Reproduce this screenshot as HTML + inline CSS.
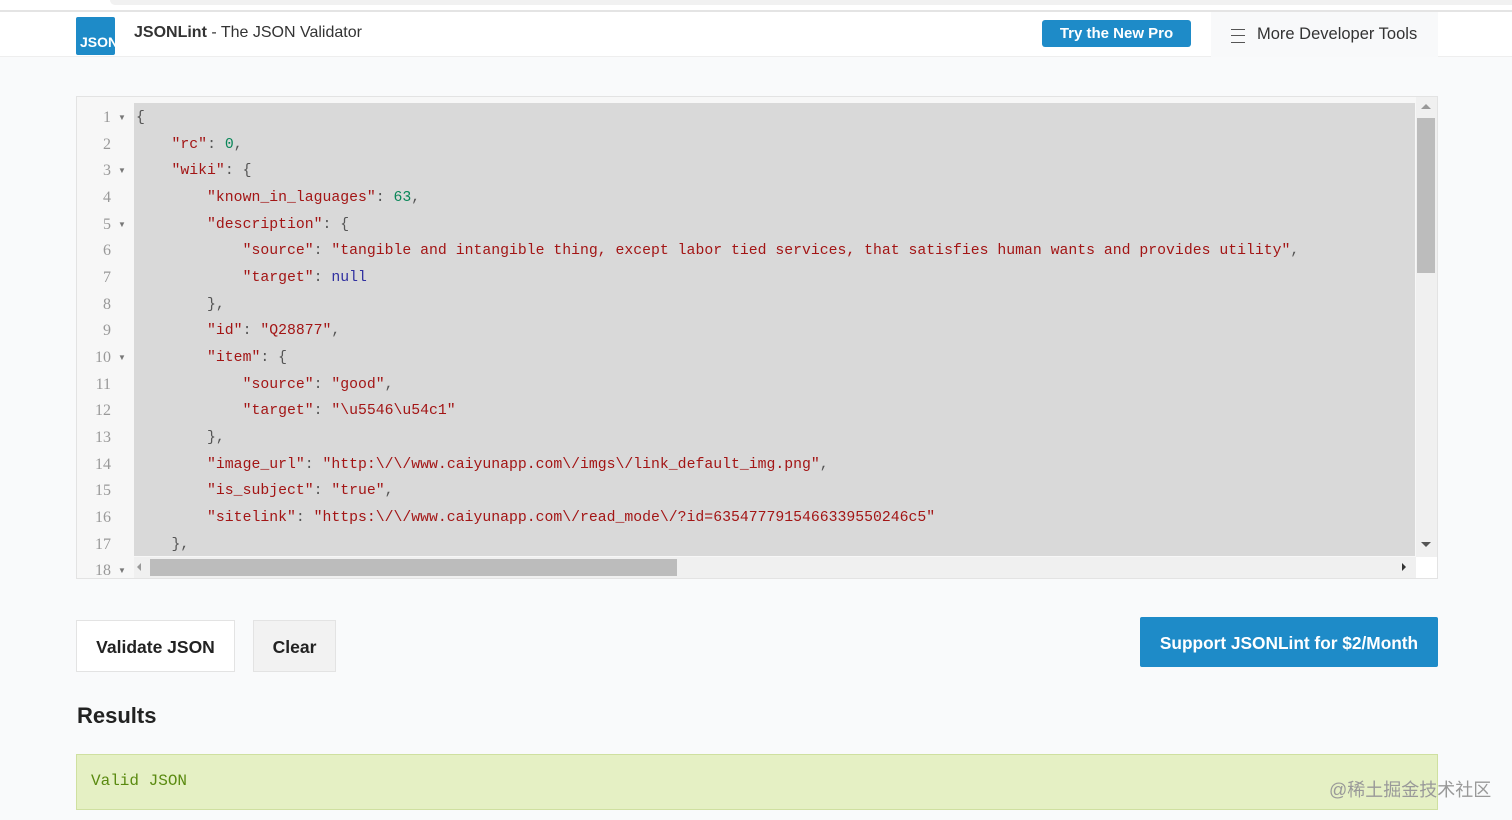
<!DOCTYPE html>
<html><head><meta charset="utf-8"><style>
*{margin:0;padding:0;box-sizing:border-box}
body{width:1512px;height:820px;overflow:hidden;background:#f9fafb;font-family:"Liberation Sans",sans-serif;position:relative}
.abs{position:absolute}
.code{position:absolute;left:136px;font-family:"Liberation Mono","Noto Serif CJK SC",monospace;font-size:14.8px;line-height:26.65px;white-space:pre;color:#555}
.k{color:#a31515}.s{color:#a31515}.n{color:#098658}.nl{color:#3030a0}
.ln{position:absolute;left:77px;width:34px;text-align:right;font-family:"Liberation Serif",serif;font-size:16px;line-height:26.65px;color:#999}
.fa{position:absolute;left:118px;font-size:8px;color:#777}
</style></head><body>
<div class="abs" style="left:0;top:0;width:1512px;height:10px;background:#fff"></div>
<div class="abs" style="left:110px;top:0;width:1402px;height:5px;background:#f1f1f1;border-radius:0 0 0 8px"></div>
<div class="abs" style="left:0;top:10px;width:1512px;height:2px;background:#e4e4e4"></div>
<div class="abs" style="left:0;top:12px;width:1512px;height:45px;background:#fff;border-bottom:1px solid #eee"></div>
<div class="abs" style="left:76px;top:17px;width:39px;height:38px;background:#1e8bc8;border-radius:2px;overflow:hidden;color:#fff;font-weight:bold;font-size:14px;line-height:14px;padding:18px 0 0 4px;white-space:nowrap">JSON</div>
<div class="abs" style="left:134px;top:24px;font-size:16px;color:#333"><b>JSONLint</b> - The JSON Validator</div>
<div class="abs" style="left:1042px;top:20px;width:149px;height:27px;background:#1e8bc8;border-radius:3px;color:#fff;font-weight:bold;font-size:15px;text-align:center;line-height:27px">Try the New Pro</div>
<div class="abs" style="left:1211px;top:12px;width:227px;height:45px;background:#f8f9fa"></div>
<div class="abs" style="left:1231px;top:29px;width:14px;height:14px;border-top:1px solid #555;border-bottom:1px solid #555"></div>
<div class="abs" style="left:1231px;top:35px;width:14px;height:1px;background:#555"></div>
<div class="abs" style="left:1257px;top:25px;font-size:16.5px;color:#333">More Developer Tools</div>

<div class="abs" style="left:76px;top:96px;width:1362px;height:483px;border:1px solid #e3e3e3;background:#f7f7f7"></div>
<div class="abs" style="left:134px;top:103px;width:1281px;height:453px;background:#d9d9d9"></div>
<div class="abs" style="left:1416px;top:97px;width:21px;height:460px;background:#f0f0f0"></div>
<div class="abs" style="left:1417px;top:118px;width:18px;height:155px;background:#bcbcbc"></div>
<div class="abs" style="left:1421px;top:104px;width:0;height:0;border:5px solid transparent;border-bottom-color:#999;border-top:0"></div>
<div class="abs" style="left:1421px;top:542px;width:0;height:0;border:5px solid transparent;border-top-color:#555;border-bottom:0"></div>
<div class="abs" style="left:134px;top:557px;width:1282px;height:21px;background:#f0f0f0"></div>
<div class="abs" style="left:1416px;top:557px;width:21px;height:21px;background:#fff"></div>
<div class="abs" style="left:150px;top:559px;width:527px;height:17px;background:#bcbcbc"></div>
<div class="abs" style="left:137px;top:563px;border:4px solid transparent;border-right-color:#999;border-left:0"></div>
<div class="abs" style="left:1402px;top:563px;border:4px solid transparent;border-left-color:#333;border-right:0"></div>

<div class="ln" style="top:105px">1<br>2<br>3<br>4<br>5<br>6<br>7<br>8<br>9<br>10<br>11<br>12<br>13<br>14<br>15<br>16<br>17<br>18</div>
<div class="fa" style="top:113px">▼</div><div class="fa" style="top:166px">▼</div><div class="fa" style="top:220px">▼</div><div class="fa" style="top:353px">▼</div><div class="fa" style="top:566px">▼</div>
<div class="code" style="top:105px">{
    <span class="k">"rc"</span>: <span class="n">0</span>,
    <span class="k">"wiki"</span>: {
        <span class="k">"known_in_laguages"</span>: <span class="n">63</span>,
        <span class="k">"description"</span>: {
            <span class="k">"source"</span>: <span class="s">"tangible and intangible thing, except labor tied services, that satisfies human wants and provides utility"</span>,
            <span class="k">"target"</span>: <span class="nl">null</span>
        },
        <span class="k">"id"</span>: <span class="s">"Q28877"</span>,
        <span class="k">"item"</span>: {
            <span class="k">"source"</span>: <span class="s">"good"</span>,
            <span class="k">"target"</span>: <span class="s">"\u5546\u54c1"</span>
        },
        <span class="k">"image_url"</span>: <span class="s">"http:\/\/www.caiyunapp.com\/imgs\/link_default_img.png"</span>,
        <span class="k">"is_subject"</span>: <span class="s">"true"</span>,
        <span class="k">"sitelink"</span>: <span class="s">"https:\/\/www.caiyunapp.com\/read_mode\/?id=6354777915466339550246c5"</span>
    },</div>

<div class="abs" style="left:76px;top:620px;width:159px;height:52px;background:#fff;border:1px solid #e3e3e3;font-weight:bold;font-size:17.5px;color:#222;text-align:center;line-height:52px">Validate JSON</div>
<div class="abs" style="left:253px;top:620px;width:83px;height:52px;background:#f2f2f2;border:1px solid #e3e3e3;font-weight:bold;font-size:17.5px;color:#222;text-align:center;line-height:52px">Clear</div>
<div class="abs" style="left:1140px;top:617px;width:298px;height:50px;background:#1e8bc8;border-radius:2px;color:#fff;font-weight:bold;font-size:17.3px;text-align:center;line-height:52px">Support JSONLint for $2/Month</div>
<div class="abs" style="left:77px;top:703px;font-weight:bold;font-size:22px;color:#222">Results</div>
<div class="abs" style="left:76px;top:754px;width:1362px;height:56px;background:#e5f0c4;border:1px solid #cfe0a0"></div>
<div class="abs" style="left:91px;top:772px;font-family:'Liberation Mono',monospace;font-size:16px;color:#5a8a10">Valid JSON</div>
<div class="abs" style="left:1329px;top:776px;font-family:'Liberation Sans','Noto Sans CJK SC',sans-serif;font-size:18px;color:#999">@稀土掘金技术社区</div>
</body></html>
